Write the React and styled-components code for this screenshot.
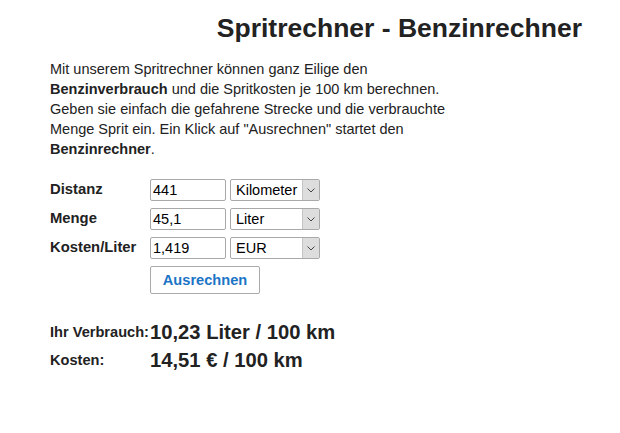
import React, { useState } from "react";
import styled, { createGlobalStyle } from "styled-components";

const GlobalStyle = createGlobalStyle`
  html, body {
    margin: 0;
    padding: 0;
    background: #fff;
  }
  body {
    font-family: "Liberation Sans", Arial, sans-serif;
    color: #222;
  }
`;

const units = {
  distance: ["Kilometer", "Meilen"],
  amount: ["Liter", "Gallonen"],
  currency: ["EUR", "CHF", "USD"],
};

const App = () => {
  const [distance, setDistance] = useState("441");
  const [amount, setAmount] = useState("45,1");
  const [price, setPrice] = useState("1,419");

  const toNum = (v) => parseFloat(String(v).replace(",", ".")) || 0;
  const d = toNum(distance);
  const a = toNum(amount);
  const p = toNum(price);
  const perHundred = d ? (a / d) * 100 : 0;
  const costHundred = perHundred * p;
  const fmt = (n) => n.toFixed(2).replace(".", ",");

  return (
    <Page>
      <GlobalStyle />
      <Title>Spritrechner - Benzinrechner</Title>
      <Intro>
        Mit unserem Spritrechner können ganz Eilige den{" "}
        <b>Benzinverbrauch</b> und die Spritkosten je 100 km berechnen. Geben
        sie einfach die gefahrene Strecke und die verbrauchte Menge Sprit ein.
        Ein Klick auf "Ausrechnen" startet den <b>Benzinrechner</b>.
      </Intro>

      <Form onSubmit={(e) => e.preventDefault()}>
        <Label>Distanz</Label>
        <Fields>
          <NumberInput
            value={distance}
            onChange={(e) => setDistance(e.target.value)}
          />
          <UnitSelect options={units.distance} />
        </Fields>

        <Label>Menge</Label>
        <Fields>
          <NumberInput
            value={amount}
            onChange={(e) => setAmount(e.target.value)}
          />
          <UnitSelect options={units.amount} />
        </Fields>

        <Label>Kosten/Liter</Label>
        <Fields>
          <NumberInput value={price} onChange={(e) => setPrice(e.target.value)} />
          <UnitSelect options={units.currency} />
        </Fields>

        <span />
        <Fields>
          <SubmitButton type="submit">Ausrechnen</SubmitButton>
        </Fields>
      </Form>

      <Results>
        <ResultRow>
          <ResultLabel>Ihr Verbrauch:</ResultLabel>
          <ResultValue>{fmt(perHundred)} Liter / 100 km</ResultValue>
        </ResultRow>
        <ResultRow>
          <ResultLabel>Kosten:</ResultLabel>
          <ResultValue>{fmt(costHundred)} € / 100 km</ResultValue>
        </ResultRow>
      </Results>
    </Page>
  );
};

const UnitSelect = ({ options }) => (
  <SelectWrap>
    <select defaultValue={options[0]}>
      {options.map((o) => (
        <option key={o}>{o}</option>
      ))}
    </select>
    <span className="arrow">
      <svg width="8" height="5" viewBox="0 0 8 5">
        <path d="M0.5 0.5 L4 4 L7.5 0.5" fill="none" stroke="#444" strokeWidth="1" />
      </svg>
    </span>
  </SelectWrap>
);

const Page = styled.div`
  padding: 12px 38px 0 50px;
`;

const Title = styled.h1`
  margin: 0;
  font-size: 26.5px;
  line-height: 32px;
  font-weight: 700;
  text-align: right;
  color: #222;
`;

const Intro = styled.p`
  width: 420px;
  margin: 15px 0 0;
  font-size: 14.5px;
  line-height: 20px;

  b {
    font-weight: 700;
  }
`;

const Form = styled.form`
  display: grid;
  grid-template-columns: 100px auto;
  row-gap: 7px;
  margin-top: 20px;
  justify-content: start;
  align-items: start;
`;

const Label = styled.span`
  padding-top: 2px;
  font-size: 14.8px;
  line-height: 16px;
  font-weight: 700;
  white-space: nowrap;
`;

const Fields = styled.div`
  display: flex;
  gap: 4px;
`;

const NumberInput = styled.input`
  box-sizing: border-box;
  width: 76px;
  height: 22px;
  padding: 0 2px;
  border: 1px solid #a9a9a9;
  border-radius: 2px;
  font-family: "Liberation Sans", Arial, sans-serif;
  font-size: 14.5px;
  color: #000;
  outline: none;
`;

const SelectWrap = styled.div`
  position: relative;
  width: 90px;
  height: 22px;

  select {
    box-sizing: border-box;
    width: 100%;
    height: 100%;
    padding: 0 0 0 5px;
    border: 1px solid #a9a9a9;
    border-radius: 2px;
    background: #fff;
    appearance: none;
    font-family: "Liberation Sans", Arial, sans-serif;
    font-size: 14.5px;
    color: #000;
    outline: none;
  }

  .arrow {
    position: absolute;
    top: 1px;
    right: 1px;
    bottom: 1px;
    width: 16px;
    display: flex;
    align-items: center;
    justify-content: center;
    background: #dddddd;
    border-left: 1px solid #c4c4c4;
    pointer-events: none;
  }
`;

const SubmitButton = styled.button`
  box-sizing: border-box;
  width: 110px;
  height: 28px;
  padding: 0;
  border: 1px solid #aaa;
  border-radius: 2px;
  background: #fff;
  font-family: "Liberation Sans", Arial, sans-serif;
  font-size: 14.6px;
  font-weight: 700;
  color: #1b74c5;
  cursor: pointer;
`;

const Results = styled.div`
  margin-top: 24px;
`;

const ResultRow = styled.div`
  display: flex;
  align-items: center;
  height: 28px;
`;

const ResultLabel = styled.span`
  width: 100px;
  font-size: 14.6px;
  line-height: 16px;
  font-weight: 700;
  white-space: nowrap;
`;

const ResultValue = styled.span`
  font-size: 20.2px;
  line-height: 28px;
  font-weight: 700;
`;

export default App;
